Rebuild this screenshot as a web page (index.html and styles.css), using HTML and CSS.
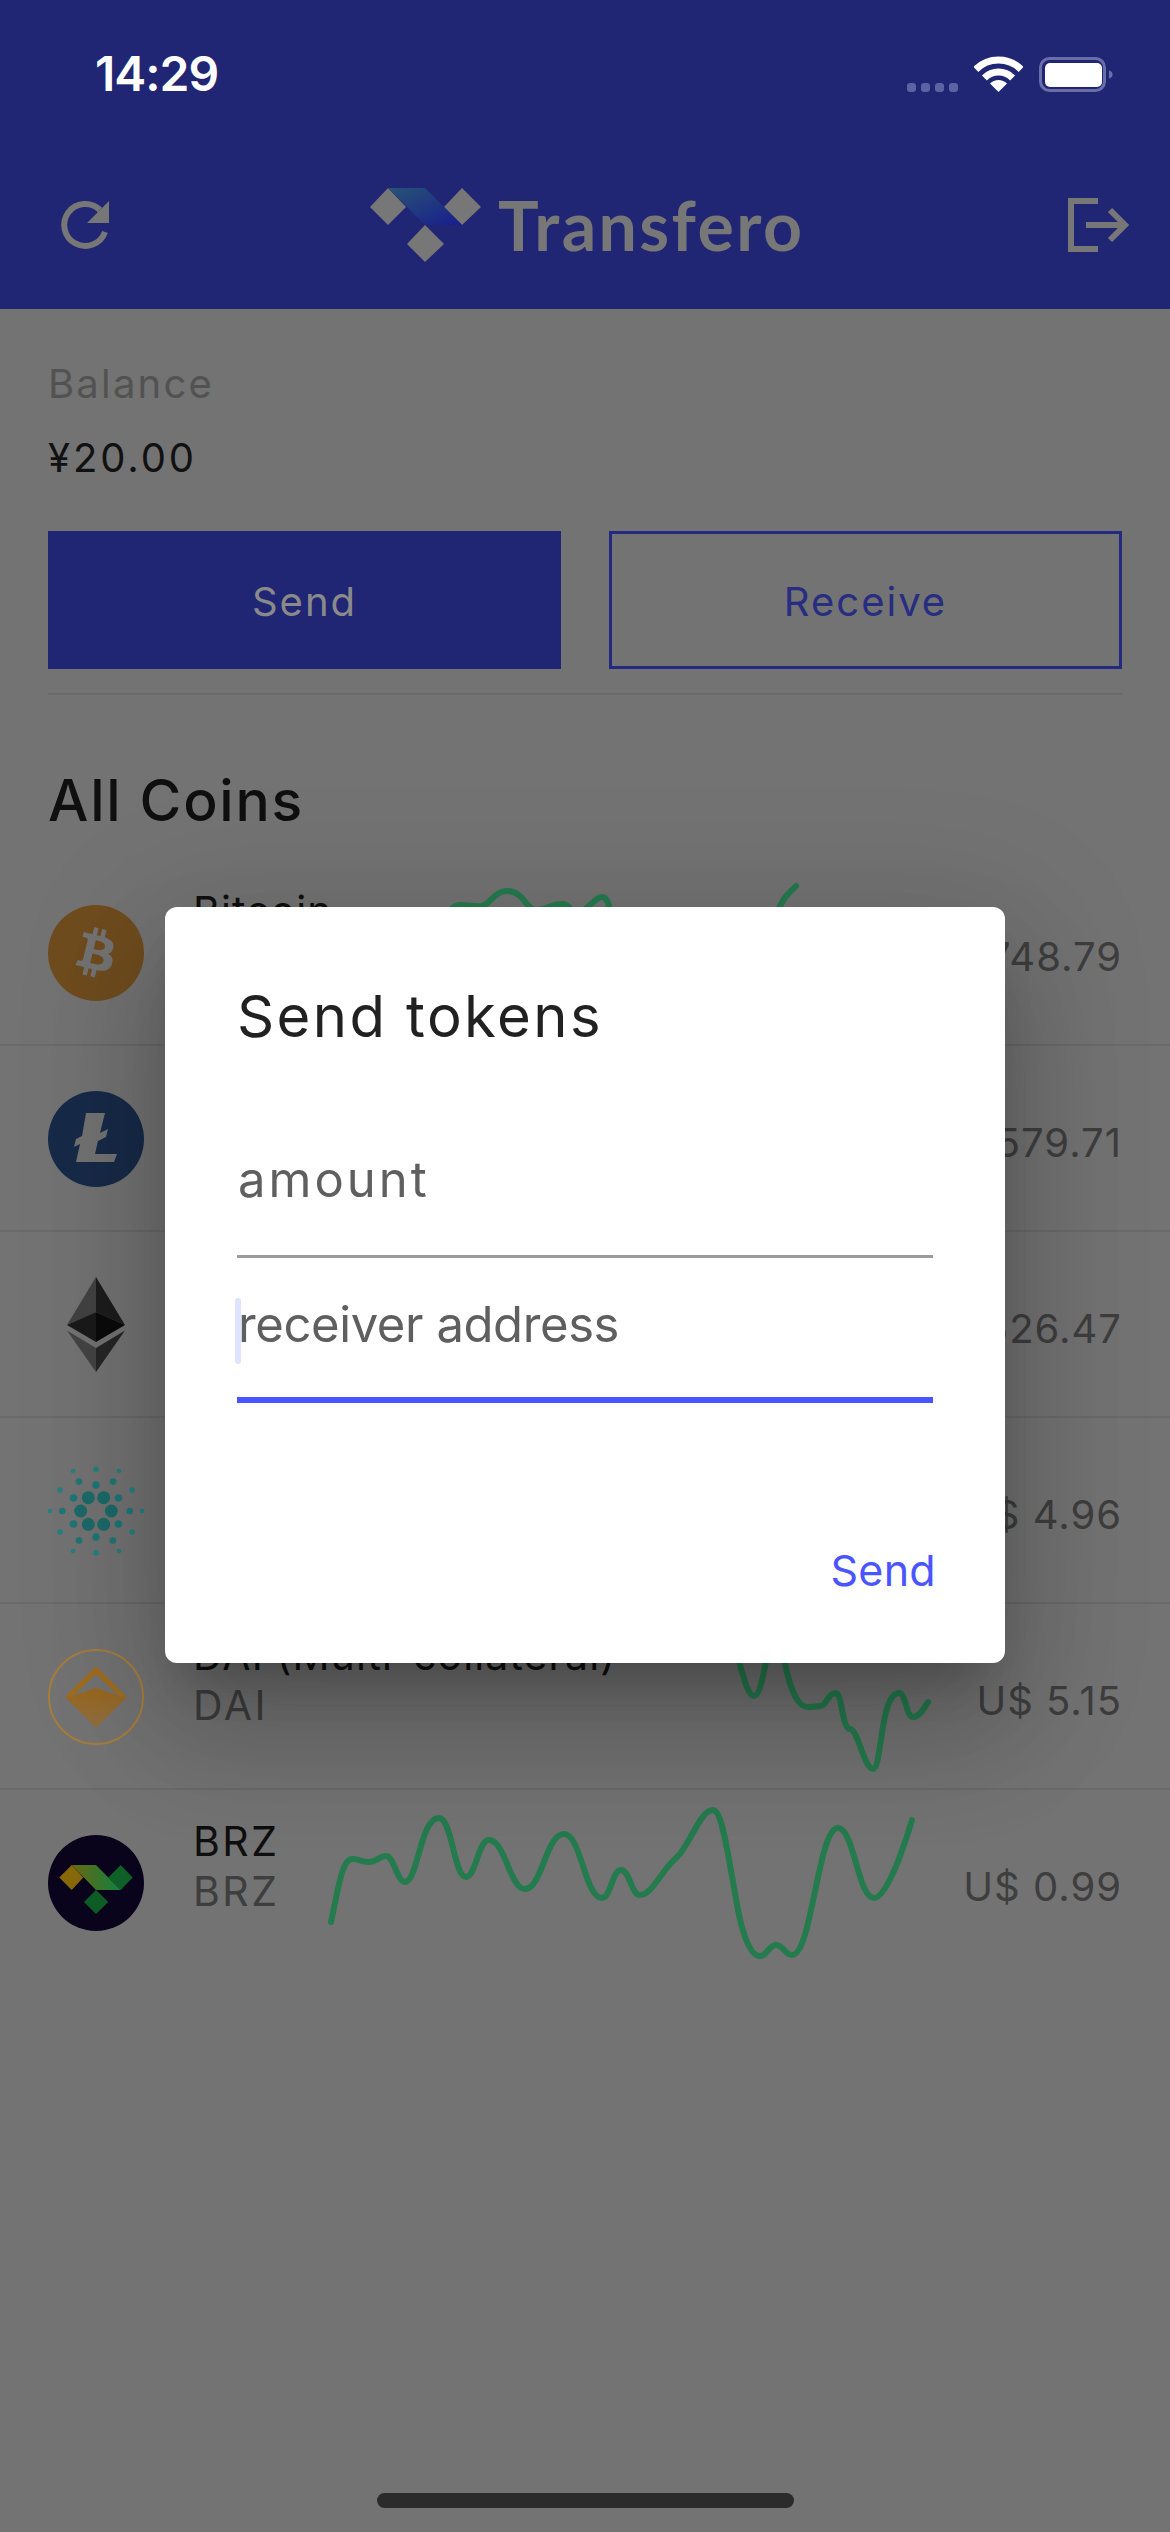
FILE: index.html
```html
<!DOCTYPE html>
<html lang="en">
<head>
<meta charset="utf-8">
<title>Transfero</title>
<link rel="stylesheet" href="styles.css">
</head>
<body>
<div class="screen">
  <header class="header">
    <div class="status">
      <span class="time">14:29</span>
      <div class="status-icons">
        <svg class="signal" width="51" height="9" viewBox="0 0 51 9"><rect x="0" width="9" height="9" rx="3"/><rect x="14" width="9" height="9" rx="3"/><rect x="28" width="9" height="9" rx="3"/><rect x="42" width="9" height="9" rx="3"/></svg>
        <svg class="wifi" width="49" height="36" viewBox="0 0 49 36"><path class="wifi-arc" d="M1.9 13.4A32 32 0 0 1 47.1 13.4"/><path class="wifi-arc" d="M10.4 21.9A20 20 0 0 1 38.6 21.9"/><path class="wifi-dot" d="M24.5 36L16 27.5A12 12 0 0 1 33 27.5Z"/></svg>
        <svg class="battery" width="74" height="35" viewBox="0 0 74 35"><rect class="battery-case" x="1.5" y="1.5" width="64" height="32" rx="9"/><rect class="battery-fill" x="6" y="6" width="57" height="24" rx="5"/><path class="battery-nub" d="M70 13.5c2.500.5 3.500 2 3.500 4s-1 3.500-3.500 4z"/></svg>
      </div>
    </div>
    <nav class="nav">
      <svg class="nav-icon" width="48" height="49" viewBox="0 0 48 49"><path class="nav-stroke" d="M40 9A21 21 0 1 0 45 31"/><polygon class="nav-fill" points="49,0 49,22 27,22"/></svg>
      <div class="logo">
        <svg width="111" height="74" viewBox="0 0 111 74">
          <defs><linearGradient id="logoBand" x1="0" y1="0" x2="1" y2="1"><stop offset="0" stop-color="#275474"/><stop offset="1" stop-color="#191c8e"/></linearGradient></defs>
          <polygon class="logo-mark" points="0,19 18,0 36,19 18,37"/>
          <polygon class="logo-mark" points="74,19 92,0 111,19 92,37"/>
          <polygon class="logo-mark" points="37,56 55,37 74,56 55,74"/>
          <polygon fill="url(#logoBand)" points="18,0 55,0 92,37 55,37"/>
        </svg>
        <span class="logo-text">Transfero</span>
      </div>
      <svg class="nav-icon exit" width="60" height="54" viewBox="0 0 60 54"><path class="nav-stroke" d="M30 3H3V51H30"/><path class="nav-stroke" d="M18 27H54"/><path class="nav-stroke" d="M42 12L57 27L42 42" /></svg>
    </nav>
  </header>

  <section class="summary">
    <div class="balance-label">Balance</div>
    <div class="balance-value">¥20.00</div>
    <div class="actions">
      <div class="btn btn-solid">Send</div>
      <div class="btn btn-outline">Receive</div>
    </div>
    <div class="summary-rule"></div>
    <h1 class="section-title">All Coins</h1>
  </section>

  <div class="coins">
    <div class="coin">
      <svg class="coin-icon" viewBox="-2.500 -2.500 29 29"><circle cx="12" cy="12" r="14.500" fill="#6f4c1e"/><path fill="#737373" d="M17.288 10.29c.24-1.59-.974-2.45-2.64-3.03l.54-2.153-1.315-.33-.525 2.107c-.345-.087-.705-.167-1.064-.25l.526-2.127-1.32-.33-.54 2.165c-.285-.067-.565-.132-.84-.2l-1.815-.45-.35 1.407s.975.225.955.236c.535.136.63.486.615.766l-1.477 5.92c-.075.166-.24.406-.614.314.015.02-.96-.24-.96-.24l-.66 1.51 1.71.426.93.242-.54 2.19 1.32.327.54-2.17c.36.1.705.19 1.05.273l-.51 2.154 1.32.33.545-2.19c2.24.427 3.93.257 4.64-1.774.57-1.637-.03-2.58-1.217-3.196.854-.193 1.5-.76 1.68-1.93h.01zm-3.01 4.22c-.404 1.64-3.157.75-4.05.53l.72-2.9c.896.23 3.757.67 3.33 2.37zm.41-4.24c-.37 1.49-2.662.735-3.405.55l.654-2.64c.744.18 3.137.524 2.75 2.084v.006z"/></svg>
      <div class="coin-names"><div class="coin-name">Bitcoin</div><div class="coin-symbol">BTC</div></div>
      <svg class="spark" viewBox="300 860 640 186"><path d="M440 930C448 912 452 905 460 905C470 905 476 907 482 906C490 904 495 891 507 891C524 891 526 910 536 910C544 910 552 904 562 904C570 904 570 912 577 912C588 912 594 897 602 897C610 897 610 915 615 930C640 1010 750 1010 778 912C781 900 788 894 796 886"/></svg>
      <div class="coin-price"><span>U$ 48,748.79</span></div>
    </div>
    <div class="coin">
      <svg class="coin-icon" viewBox="0 0 96 96"><circle cx="48" cy="48" r="48" fill="#172a48"/><polygon fill="#737373" points="38,22 57,22 52,42 60,38 58,46 50,50 47,63 69,63 66,71 28,71 32,53 26,56 28,48 34,45"/></svg>
      <div class="coin-names"><div class="coin-name">Litecoin</div><div class="coin-symbol">LTC</div></div>
      <svg class="spark" viewBox="300 1046 640 186"><path d="M340 1140C420 1060 500 1190 600 1120C680 1070 780 1180 900 1100"/></svg>
      <div class="coin-price"><span>U$ 579.71</span></div>
    </div>
    <div class="coin">
      <svg class="coin-icon" viewBox="-19 0 96 96">
        <polygon fill="#424242" points="29,0 0,48 29,35"/><polygon fill="#1c1c1c" points="29,0 58,48 29,35"/>
        <polygon fill="#1a1a1a" points="0,48 29,35 29,65"/><polygon fill="#0b0b0b" points="58,48 29,35 29,65"/>
        <polygon fill="#444444" points="0,53.500 29,95 29,71"/><polygon fill="#262626" points="58,53.500 29,95 29,71"/>
      </svg>
      <div class="coin-names"><div class="coin-name">Ethereum</div><div class="coin-symbol">ETH</div></div>
      <svg class="spark" viewBox="300 1232 640 186"><path d="M340 1300C420 1380 500 1260 600 1340C680 1390 780 1270 900 1320"/></svg>
      <div class="coin-price"><span>U$ 526.47</span></div>
    </div>
    <div class="coin">
      <svg class="coin-icon" viewBox="-48 -48 96 96">
        <g fill="#1d6a6a"><circle cx="-7.700" cy="-13.300" r="6.500"/><circle cx="7.700" cy="-13.300" r="6.500"/><circle cx="-15.300" cy="0" r="6.500"/><circle cx="15.300" cy="0" r="6.500"/><circle cx="-7.700" cy="13.300" r="6.500"/><circle cx="7.700" cy="13.300" r="6.500"/></g>
        <g fill="#217676"><circle cx="0" cy="-26" r="3.800"/><circle cx="0" cy="26" r="3.800"/><circle cx="-22.500" cy="-13" r="3.800"/><circle cx="22.500" cy="-13" r="3.800"/><circle cx="-22.500" cy="13" r="3.800"/><circle cx="22.500" cy="13" r="3.800"/><circle cx="-33.700" cy="0" r="3.300"/><circle cx="33.700" cy="0" r="3.300"/><circle cx="-17" cy="-29.500" r="3.300"/><circle cx="17" cy="-29.500" r="3.300"/><circle cx="-17" cy="29.500" r="3.300"/><circle cx="17" cy="29.500" r="3.300"/></g>
        <g fill="#258080"><circle cx="0" cy="-41.700" r="2.800"/><circle cx="0" cy="41.700" r="2.800"/><circle cx="-23" cy="-40" r="2.300"/><circle cx="23" cy="-40" r="2.300"/><circle cx="-23" cy="40" r="2.300"/><circle cx="23" cy="40" r="2.300"/><circle cx="-36" cy="-21" r="2.800"/><circle cx="36" cy="-21" r="2.800"/><circle cx="-36" cy="21" r="2.800"/><circle cx="36" cy="21" r="2.800"/><circle cx="-46" cy="0" r="2.200"/><circle cx="46" cy="0" r="2.200"/></g>
      </svg>
      <div class="coin-names"><div class="coin-name">Cardano</div><div class="coin-symbol">ADA</div></div>
      <svg class="spark" viewBox="300 1418 640 186"><path d="M340 1500C420 1440 500 1560 600 1490C680 1440 780 1550 900 1480"/></svg>
      <div class="coin-price"><span>U$ 4.96</span></div>
    </div>
    <div class="coin">
      <svg class="coin-icon" viewBox="0 0 96 96">
        <defs><linearGradient id="daiLow" x1="0" y1="0" x2="0" y2="1"><stop offset="0" stop-color="#9a681e"/><stop offset="1" stop-color="#8f6f42"/></linearGradient></defs>
        <ellipse cx="48" cy="48" rx="47" ry="47" fill="none" stroke="#a67e3c" stroke-width="2"/>
        <path fill="#a06d20" fill-rule="evenodd" d="M48 17L79 48L48 48L17 48ZM48 25L25 47L48 39L71 47Z"/>
        <polygon fill="url(#daiLow)" points="17,48 25,47 48,39 71,47 79,48 48,79"/>
      </svg>
      <div class="coin-names"><div class="coin-name">DAI (Multi-collateral)</div><div class="coin-symbol">DAI</div></div>
      <svg class="spark" viewBox="300 1604 640 186"><path d="M728 1625C738 1650 745 1696 754 1696C764 1696 768 1630 776 1630C782 1630 786 1707 808 1707C814 1707 815 1706 821 1706C826 1706 828 1693 836 1693C842 1693 842 1729 850 1729C858 1729 864 1769 873 1769C882 1769 880 1693 899 1693C906 1693 906 1717 913 1717C920 1717 924 1708 928 1702"/></svg>
      <div class="coin-price"><span>U$ 5.15</span></div>
    </div>
    <div class="coin">
      <svg class="coin-icon" viewBox="0 0 96 96">
        <defs><linearGradient id="brzBand" x1="0" y1="0" x2="1" y2="0"><stop offset="0" stop-color="#6a6812"/><stop offset="1" stop-color="#118040"/></linearGradient></defs>
        <circle cx="48" cy="48" r="48" fill="#0a031c"/>
        <polygon fill="#876808" points="11.300,42.500 23.700,30 35.300,42.500 23.700,55"/>
        <polygon fill="#0f6026" points="60.300,42.500 72.700,30 84.700,42.500 72.700,55"/>
        <polygon fill="#0e5c25" points="36,67 48,55 60.300,67 48,79"/>
        <polygon fill="url(#brzBand)" points="23.700,30 48,30 72.700,55 48,55"/>
      </svg>
      <div class="coin-names"><div class="coin-name coin-name-caps">BRZ</div><div class="coin-symbol">BRZ</div></div>
      <svg class="spark" viewBox="300 1790 640 186"><path d="M331 1922C338 1890 342 1859 352 1859C360 1859 362 1862 369 1862C376 1862 380 1856 386 1856C394 1856 397 1882 405 1882C418 1882 420 1818 439 1818C452 1818 454 1877 466 1877C476 1877 478 1840 489 1840C505 1840 510 1889 525 1889C542 1889 546 1834 564 1834C581 1834 585 1898 602 1898C611 1898 612 1870 621 1870C630 1870 631 1895 640 1895C652 1895 660 1872 677 1857C690 1845 700 1810 713 1810C722 1810 727 1850 735 1893C740 1925 748 1956 760 1956C767 1956 769 1945 776 1945C783 1945 785 1955 792 1955C812 1955 818 1828 838 1828C854 1828 858 1898 874 1898C885 1898 900 1860 912 1820"/></svg>
      <div class="coin-price"><span>U$ 0.99</span></div>
    </div>
  </div>

  <div class="home-bar"></div>

  <div class="overlay">
    <div class="dialog">
      <h2 class="dialog-title">Send tokens</h2>
      <div class="field field-amount">amount</div>
      <div class="field field-active"><span class="caret"></span>receiver address</div>
      <div class="dialog-actions"><span class="dialog-send">Send</span></div>
    </div>
  </div>
</div>
</body>
</html>
```

FILE: styles.css
```css
* { box-sizing: border-box; }
html, body { margin: 0; padding: 0; }
body { font-family: "Inter", "Liberation Sans", sans-serif; }

.screen {
  position: relative;
  width: 1170px;
  height: 2532px;
  overflow: hidden;
  display: flex;
  flex-direction: column;
  background: #737373;
  color: #0f0f0f;
}

/* header */
.header { height: 309px; padding-top: 55px; background: #202674; flex: none; }
.status { display: flex; align-items: center; height: 37px; padding: 0 57px 0 95px; }
.time { font-size: 48px; line-height: 37px; font-weight: 600; color: #fff; letter-spacing: -1px; }
.status-icons { margin-left: auto; display: flex; align-items: flex-end; gap: 16px; }
.signal { fill: #5d62a3; }
.wifi-arc { fill: none; stroke: #fff; stroke-width: 7; }
.wifi-dot { fill: #fff; }
.battery-case { fill: none; stroke: #6a6ea8; stroke-width: 3; }
.battery-fill { fill: #fff; }
.battery-nub { fill: #6a6ea8; }

.nav { display: flex; align-items: center; height: 74px; margin-top: 96px; padding: 0 42px 0 60px; }
.nav-icon { flex: none; overflow: visible; }
.nav-stroke { fill: none; stroke: #777; stroke-width: 6; }
.nav-fill { fill: #777; }
.exit { margin-left: auto; }
.logo { display: flex; align-items: center; gap: 17px; margin-left: 262px; }
.logo-mark { fill: #777; }
.logo-text { font-family: "Lato", sans-serif; font-weight: 700; font-size: 68px; line-height: 74px; letter-spacing: 2.400px; color: #777; }

/* summary */
.summary { padding: 50px 48px 0; flex: none; }
.balance-label { font-size: 40px; line-height: 50px; letter-spacing: 2.200px; color: #525252; }
.balance-value { font-size: 40px; line-height: 50px; letter-spacing: 2.900px; margin-top: 24px; color: #111; }
.actions { display: grid; grid-template-columns: 1fr 1fr; gap: 48px; margin-top: 48px; }
.btn {
  height: 138px;
  padding-top: 2px;
  display: flex;
  align-items: center;
  justify-content: center;
  font-size: 40px;
  letter-spacing: 2px;
}
.btn-solid { background: #202674; color: #8a8a8a; }
.btn-outline { border: 3px solid #232a80; color: #272d80; }
.summary-rule { height: 2px; margin-top: 24px; background: #6a6a6a; }
.section-title { margin: 71px 0 24px; font-size: 57px; line-height: 70px; font-weight: 500; letter-spacing: 1.800px; color: #0f0f0f; }

/* coin list */
.coins { flex: none; }
.coin {
  display: flex;
  align-items: center;
  height: 186px;
  padding: 2px 0 0 48px;
  border-bottom: 2px solid #6a6a6a;
}
.coin:last-child { border-bottom-color: transparent; }
.coin-icon { width: 96px; height: 96px; flex: none; margin-right: 49px; }
.coin-names { width: 107px; flex: none; align-self: flex-start; margin-top: 24px; white-space: nowrap; }
.coin-name { font-size: 41px; line-height: 50px; letter-spacing: 1.100px; color: #0f0f0f; }
.coin-name-caps { letter-spacing: 2.500px; }
.coin-symbol { font-size: 41px; line-height: 50px; letter-spacing: 2.500px; color: #3e3e3e; }
.spark { width: 640px; height: 186px; flex: none; }
.spark path { fill: none; stroke: #247b4e; stroke-width: 6; stroke-linecap: round; }
.coin-price {
  flex: 1;
  min-width: 0;
  display: flex;
  justify-content: flex-end;
  padding-right: 48px;
  margin-top: 8px;
  font-size: 40px;
  line-height: 50px;
  letter-spacing: 1px;
  color: #3e3e3e;
  white-space: nowrap;
}

.home-bar {
  flex: none;
  width: 417px;
  height: 15px;
  margin: auto 0 24px 377px;
  border-radius: 8px;
  background: #2b2b2b;
}

/* dialog */
.overlay {
  position: absolute;
  inset: 0;
  display: flex;
  justify-content: center;
  align-items: flex-start;
  padding-top: 907px;
}
.dialog {
  width: 840px;
  height: 756px;
  padding: 74px 72px 0;
  border-radius: 12px;
  background: #fff;
  box-shadow: 0 33px 45px -21px rgba(0,0,0,.2), 0 72px 114px 9px rgba(0,0,0,.14), 0 27px 138px 24px rgba(0,0,0,.12);
}
.dialog-title { margin: 0 0 62px; font-size: 58px; line-height: 70px; font-weight: 400; letter-spacing: 2.400px; color: #212121; }
.field {
  position: relative;
  height: 145px;
  padding: 37px 0 0 1px;
  border-bottom: 3px solid #9b9b9b;
  font-size: 49px;
  line-height: 60px;
  letter-spacing: -.4px;
  color: #5f5f5f;
}
.field-amount { letter-spacing: 3px; }
.field-active { border-bottom: 6px solid #4a55ff; }
.caret {
  position: absolute;
  left: -2px;
  top: 40px;
  width: 6px;
  height: 66px;
  border-radius: 3px;
  background: #e0e3fd;
}
.dialog-actions { display: flex; justify-content: flex-end; margin: 137px -3px 0 0; }
.dialog-send { font-size: 43px; line-height: 60px; letter-spacing: .3px; color: #4a55ff; }
```
